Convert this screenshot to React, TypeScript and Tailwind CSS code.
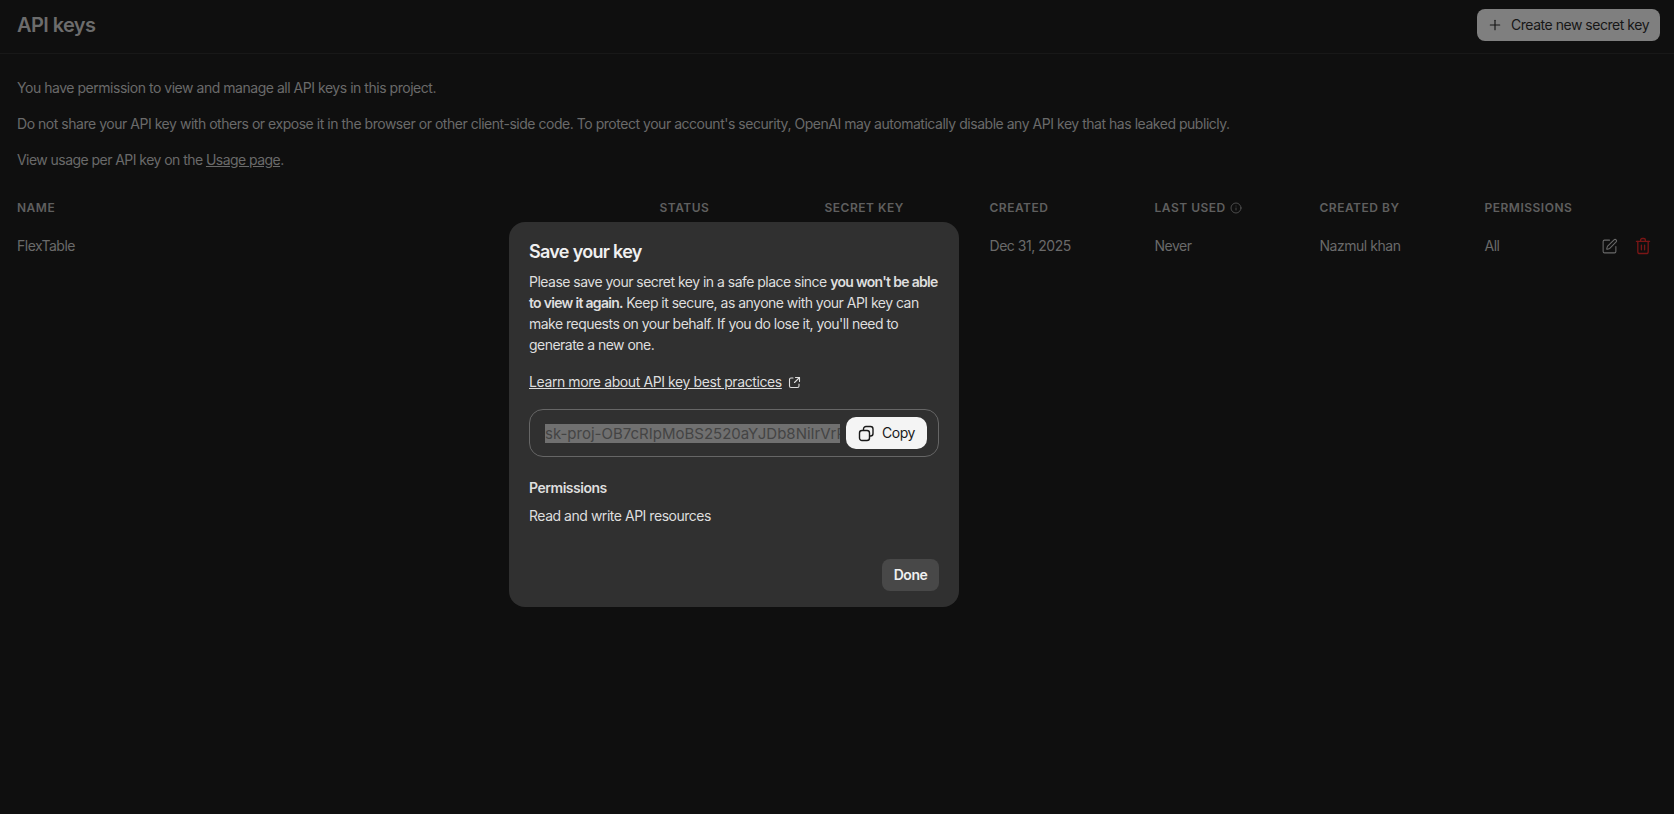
import { Plus, Info, SquarePen } from "lucide-react";

const cols = [
  { label: "STATUS", w: "w-[165px]" },
  { label: "SECRET KEY", w: "w-[165px]" },
  { label: "CREATED", w: "w-[165px]" },
  { label: "LAST USED", w: "w-[165px]", info: true },
  { label: "CREATED BY", w: "w-[165px]" },
  { label: "PERMISSIONS", w: "w-[150px]" },
];

export default function App() {
  return (
    <div className="relative h-[814px] w-full overflow-hidden bg-[#0f0f0f] font-['Inter',sans-serif] text-[14px] leading-5 text-[#6a6a6a] tracking-[-0.47px]">
      <header className="flex h-[54px] items-center justify-between border-b border-[#181818] pl-[17px] pr-[14px] pb-[4px]">
        <h1 className="text-[20px] font-semibold leading-7 text-[#6c6c6c] tracking-[-0.6px]">API keys</h1>
        <button className="flex h-8 w-[183px] items-center gap-[8px] rounded-lg bg-[#7f7f7f] pl-[10px] text-[#161616]">
          <Plus size={16} strokeWidth={1.75} />
          <span>Create new secret key</span>
        </button>
      </header>

      <main className="pl-[17px] pr-4 pt-6">
        <p className="mb-4">You have permission to view and manage all API keys in this project.</p>
        <p className="mb-4">
          Do not share your API key with others or expose it in the browser or other client-side code. To protect your account's security, OpenAI may automatically disable any API key that has leaked publicly.
        </p>
        <p className="tracking-[-0.55px]">
          View usage per API key on the <a className="underline">Usage page</a>.
        </p>

        <div className="mt-[28px] flex h-[20px] items-center text-[12px] font-semibold text-[#5f5f5f] tracking-[0.5px]">
          <div className="w-[642.5px]">NAME</div>
          {cols.map((c) => (
            <div key={c.label} className={`${c.w} flex items-center gap-1`}>
              {c.label}
              {c.info && <Info size={12} strokeWidth={1.5} />}
            </div>
          ))}
        </div>

        <div className="mt-[18px] flex h-[20px] items-center">
          <div className="w-[972.5px]">FlexTable</div>
          <div className="w-[165px]">Dec 31, 2025</div>
          <div className="w-[165px]">Never</div>
          <div className="w-[165px]">Nazmul khan</div>
          <div className="w-[116.5px]">All</div>
          <div className="flex items-center gap-[17px]">
            <SquarePen size={17} strokeWidth={1.5} />
            <svg width="16" height="18" viewBox="0 0 17 19" fill="none" stroke="#7a1616" strokeWidth="1.4" strokeLinecap="round" strokeLinejoin="round">
              <path d="M1.5 4.5h14" />
              <path d="M6 4.5V3a1.5 1.5 0 0 1 1.5-1.5h2A1.5 1.5 0 0 1 11 3v1.5" />
              <path d="M3 4.5v11a2 2 0 0 0 2 2h7a2 2 0 0 0 2-2v-11" />
              <path d="M6.8 8.5v5M10.2 8.5v5" />
            </svg>
          </div>
        </div>
      </main>

      <div className="absolute left-[509px] top-[222px] flex h-[385px] w-[450px] flex-col rounded-2xl bg-[#303030] px-5 pt-[19px] text-[#dedede]">
        <h2 className="text-[18px] font-semibold leading-[22px] text-[#f0f0f0] tracking-[-0.7px]">Save your key</h2>
        <p className="mt-[8px] leading-[21px] tracking-[-0.52px]">
          Please save your secret key in a safe place since <b className="font-semibold tracking-[-0.7px]">you won't be able to view it again.</b> Keep it secure, as anyone with your API key can make requests on your behalf. If you do lose it, you'll need to generate a new one.
        </p>
        <div className="mt-[17px] flex items-center gap-[6px] leading-5 tracking-[-0.4px]">
          <a className="underline">Learn more about API key best practices</a>
          <svg width="13" height="13" viewBox="0 0 13 13" fill="none" stroke="currentColor" strokeWidth="1.1" strokeLinecap="round" strokeLinejoin="round">
            <path d="M5 2H3a1.5 1.5 0 0 0-1.5 1.5v6.5A1.5 1.5 0 0 0 3 11.5h6.5A1.5 1.5 0 0 0 11 10V8" />
            <path d="M7.5 1.5h4v4M11.5 1.5 6.5 6.5" />
          </svg>
        </div>
        <div className="mt-[17px] flex h-12 items-center rounded-[14px] border border-[#666666] pl-[15px] pr-[11px]">
          <div className="min-w-0 flex-1 overflow-hidden whitespace-nowrap text-[15px] leading-[19px] text-[#444444] tracking-normal">
            <span className="bg-[#707070]">sk-proj-OB7cRIpMoBS2520aYJDb8NiIrVrPqT3BlbkFJ</span>
          </div>
          <button className="ml-[6px] flex h-8 w-[81px] shrink-0 items-center justify-center gap-[7px] rounded-[10px] bg-[#f4f4f4] text-[#1a1a1a]">
            <svg width="17" height="17" viewBox="0 0 17 17" fill="none" stroke="currentColor" strokeWidth="1.4" strokeLinejoin="round">
              <path d="M5.5 5V4a2.5 2.5 0 0 1 2.5-2.5h4.5A2.5 2.5 0 0 1 15 4v4.5a2.5 2.5 0 0 1-2.5 2.5H11.5" />
              <rect x="1.5" y="5.5" width="10" height="10" rx="2.5" />
            </svg>
            <span>Copy</span>
          </button>
        </div>
        <div className="mt-[21px] font-semibold">Permissions</div>
        <div className="mt-[8px]">Read and write API resources</div>
        <div className="mt-auto mb-[16px] flex justify-end">
          <button className="h-8 w-[57px] rounded-lg bg-[#484848] font-semibold text-[#f0f0f0]">Done</button>
        </div>
      </div>
    </div>
  );
}
